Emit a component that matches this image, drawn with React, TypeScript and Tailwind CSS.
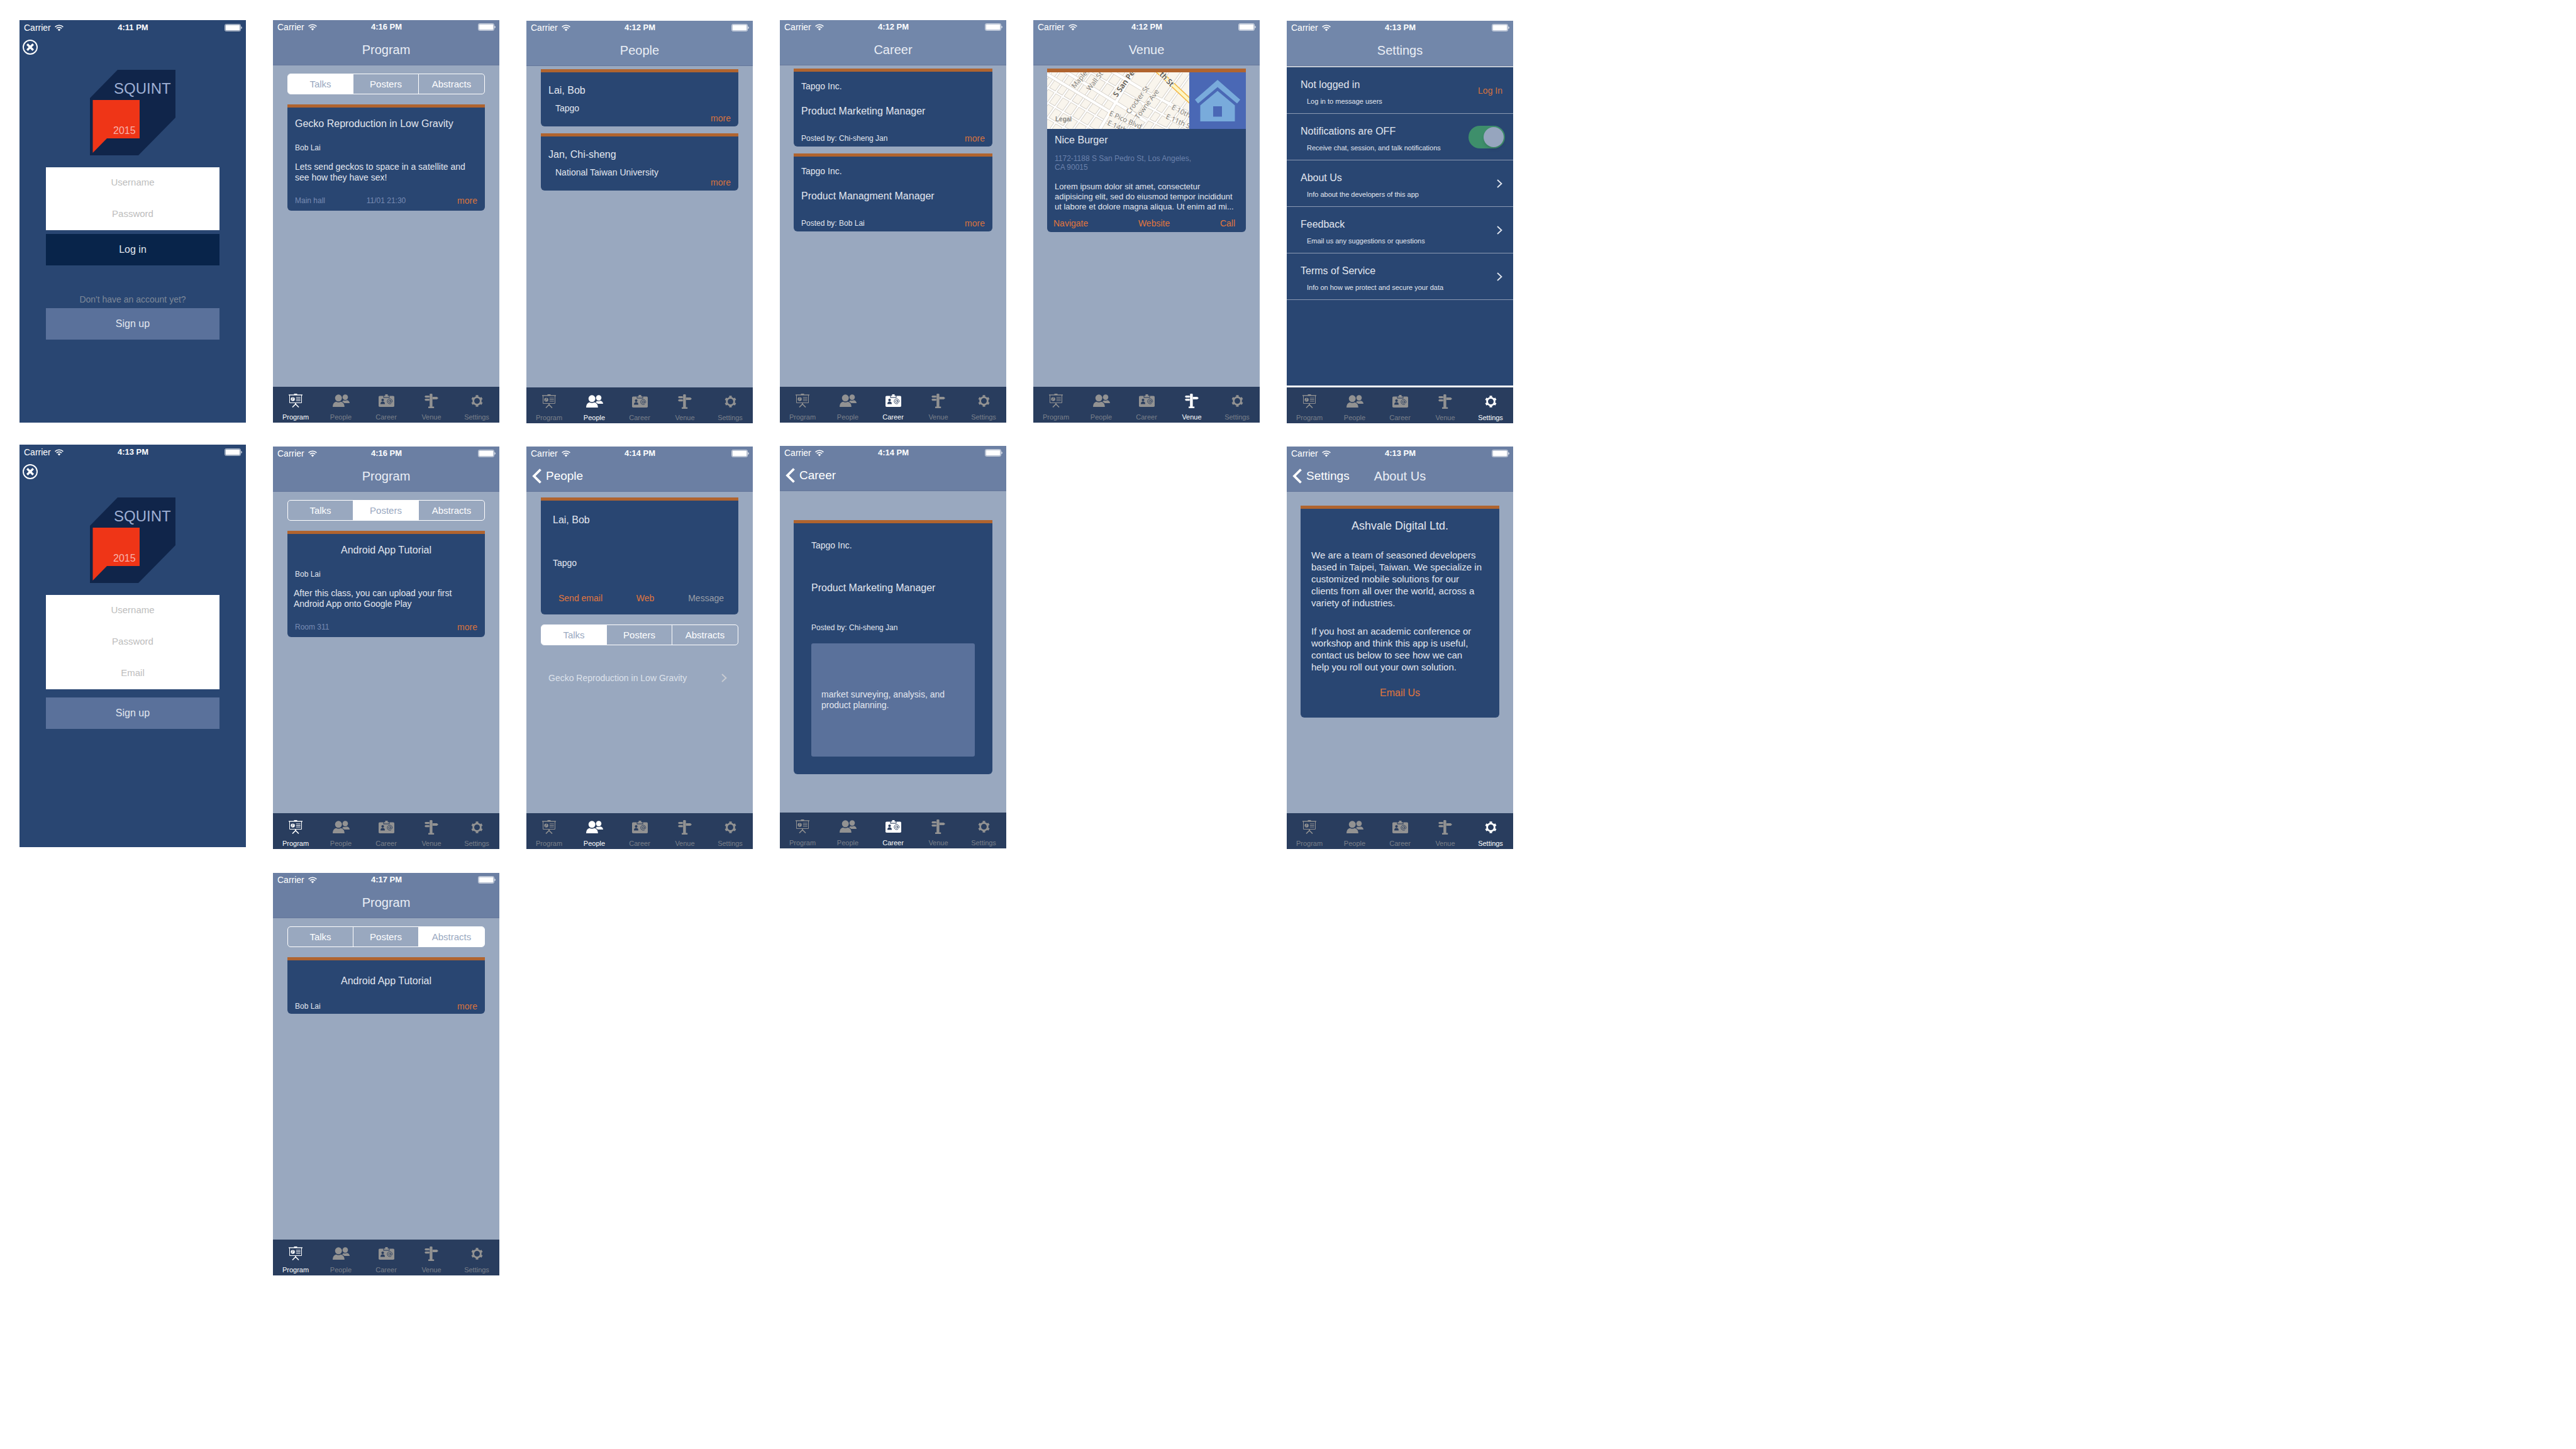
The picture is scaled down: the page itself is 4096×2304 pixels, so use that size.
import type { ReactNode } from "react";

const TABS = ["Program", "People", "Career", "Venue", "Settings"] as const;
type Tab = (typeof TABS)[number];

/* ---------- icons ---------- */

function TabIcon({ name }: { name: Tab }) {
  switch (name) {
    case "Program":
      return (
        <svg className="h-[22px] w-[22px]" viewBox="0 0 22 22" fill="none" stroke="currentColor">
          <path d="M0 2h22" strokeWidth="1.4" />
          <path d="M8.5 1h5" strokeWidth="2" />
          <path d="M1.5 2v12.5h19V2" strokeWidth="1" />
          <circle cx="6.6" cy="8.6" r="3.2" fill="currentColor" stroke="none" />
          <path d="M6.8 8.6V5.6M6.8 8.6l-2 1.8" className="stroke-[#293d5e]" strokeWidth="0.8" />
          <path d="M11.8 6h7M11.8 8.5h7M11.8 11h7" strokeWidth="1.1" />
          <path d="M11 15v2M11 16.5l-5 5M11 16.5l5 5" strokeWidth="1.6" />
        </svg>
      );
    case "People":
      return (
        <svg className="h-5 w-[27px]" viewBox="0 0 27 20" fill="currentColor">
          <circle cx="20" cy="4.6" r="4.3" />
          <path d="M17 9.400c1.800.8 4.200.8 6-.2 2.400.8 4 2.500 4 4.800h-8.500c-.8-1-2-1.700-3.500-2.200.9-.7 1.600-1.400 2-2.400z" />
          <circle cx="9.200" cy="5.800" r="5.500" />
          <path d="M0 20c0-4.500 1.800-7.300 5.400-8.300 2.300 1.300 5.400 1.300 7.600 0 3.900 1 5.800 3.800 5.800 8.300z" />
        </svg>
      );
    case "Career":
      return (
        <svg className="h-5 w-[25px]" viewBox="0 0 25 20" fill="currentColor">
          <rect x="0" y="2.500" width="25" height="17.500" rx="1.800" />
          <path d="M7.500 2v3.600h10V2" className="fill-[#293d5e]" />
          <path d="M10.500 0h4v2.200h2V4.600h-8V2.200h2z" />
          <g className="fill-[#293d5e]">
            <circle cx="6.500" cy="9" r="2.100" />
            <path d="M3 15.500c0-2.300 1-3.600 2.600-3.900h1.800c1.600.3 2.600 1.600 2.600 3.900z" />
          </g>
          <g className="stroke-[#293d5e]" fill="none" strokeWidth="0.9">
            <circle cx="17.800" cy="11.200" r="1.700" />
            <path d="M19.500 9.400v2.300c0 1.500 2.300 1.500 2.300-.5a4 4 0 1 0-1.700 3.200" />
          </g>
        </svg>
      );
    case "Venue":
      return (
        <svg className="h-[23px] w-[22px]" viewBox="0 0 22 23" fill="currentColor">
          <path d="M8.200 1c0-1.300 4.400-1.300 4.400 0v19.500h2.600V23H6v-2.500h2.200z" />
          <path d="M1.500 3h6v3.200h-6L0 4.600zM1.500 8h6v3.200h-6L0 9.600z" />
          <path d="M7 4.200h2v1H7zM7 9.200h2v1H7z" />
          <path d="M12.600 5h7.200l2.200 2-2.200 2h-7.200z" />
        </svg>
      );
    case "Settings":
      return (
        <svg className="h-[19px] w-[19px]" viewBox="0 0 19 19" fill="none" stroke="currentColor">
          <circle cx="9.500" cy="9.500" r="5.900" strokeWidth="2.800" />
          <path
            d="M9.500 3V.3M9.500 16v2.700M3.900 6.200 1.500 4.900M15.100 12.800l2.400 1.300M3.900 12.800l-2.400 1.300M15.100 6.200l2.400-1.300"
            strokeWidth="4"
          />
        </svg>
      );
  }
}

function Chevron() {
  return (
    <svg className="h-[14px] w-[9px] shrink-0" viewBox="0 0 9 14" fill="none" stroke="currentColor" strokeWidth="1.800">
      <path d="M1 1l6.500 6L1 13" />
    </svg>
  );
}

function BackChevron() {
  return (
    <svg className="h-6 w-[15px]" viewBox="0 0 15 24" fill="none" stroke="currentColor" strokeWidth="3.800">
      <path d="M13.500 1.500 3 12 13.500 22.500" />
    </svg>
  );
}

function Wifi() {
  return (
    <svg className="h-[11px] w-[14px]" viewBox="0 0 14 11" fill="none" stroke="currentColor" strokeWidth="1.500">
      <path d="M.6 3.900a9.200 9.200 0 0 1 12.800 0M2.800 6.200a6 6 0 0 1 8.400 0" />
      <path d="M7 10.600 4.700 8.100a3.300 3.300 0 0 1 4.600 0z" fill="currentColor" stroke="none" />
    </svg>
  );
}

function Battery() {
  return (
    <svg className="h-3 w-7" viewBox="0 0 28 12" fill="currentColor">
      <rect x="0.500" y="0.500" width="25" height="11" rx="2" fill="none" stroke="currentColor" strokeOpacity="0.600" />
      <rect x="1.500" y="1.500" width="23" height="9" rx="1" />
      <path d="M26.500 4v4c1.600-.5 1.600-3.500 0-4z" />
    </svg>
  );
}

function Logo() {
  return (
    <svg className="h-[136px] w-[136px]" viewBox="0 0 136 136" role="img" aria-label="SQUINT 2015">
      <path d="M44 0H136V76L77 136H0V45z" fill="#10254a" />
      <path d="M4.500 48H79V109H27L4.500 132z" fill="#ef3517" />
      <text x="38" y="38" fontSize="24" fill="#9fb0d4" fontFamily="Liberation Sans, Arial, sans-serif">
        SQUINT
      </text>
      <text x="37" y="102" fontSize="16" fill="#f8b3ab" fontFamily="Liberation Sans, Arial, sans-serif">
        2015
      </text>
    </svg>
  );
}

/* ---------- map ---------- */

const CROSS = [-58, -45, -28, -12, 6, 24, 42, 62, 110, 128, 150, 166, 190, 210];
const LONG = [-62, -40, 24, 48, 72];

function StreetMap() {
  return (
    <svg
      className="h-[90px] min-w-0 flex-1"
      viewBox="0 0 226 90"
      preserveAspectRatio="xMinYMin slice"
      fontFamily="Open Sans, Noto Sans, sans-serif"
      fontSize="11"
      fill="#7d7b78"
    >
      <rect width="226" height="90" fill="#f9f5ed" />
      <g stroke="#cdc8c0" strokeWidth="4">
        {CROSS.map((x) => (
          <path key={x} d={`M${x} 90l64-90`} />
        ))}
        {LONG.map((y) => (
          <path key={y} d={`M0 ${y}l226 132`} />
        ))}
        <path d="M128 59l98 48M150 50l76 38M168 36l58 28" />
      </g>
      <g stroke="#ffffff" strokeWidth="2.500">
        {CROSS.map((x) => (
          <path key={x} d={`M${x} 90l64-90`} />
        ))}
        {LONG.map((y) => (
          <path key={y} d={`M0 ${y}l226 132`} />
        ))}
        <path d="M128 59l98 48M150 50l76 38M168 36l58 28" />
      </g>
      <g stroke="#d5d0c8" strokeWidth="6">
        <path d="M0 3l150 90M28-2l130 80M84 90l55-92M96-6l60 36" />
      </g>
      <g stroke="#ffffff" strokeWidth="4.500">
        <path d="M0 3l150 90M28-2l130 80M84 90l55-92M96-6l60 36" />
      </g>
      <path d="M172-6l60 56" stroke="#f5b53f" strokeWidth="8" />
      <path d="M172-6l60 56" stroke="#fdf6c4" strokeWidth="5" />
      <g stroke="#f9f5ed" strokeWidth="2" paintOrder="stroke">
        <text x="44" y="26" transform="rotate(-50 44 26)">Maple</text>
        <text x="68" y="30" transform="rotate(-52 68 30)">Wall St</text>
        <text x="111" y="40" fontSize="12" fontWeight="600" fill="#55534f" transform="rotate(-54 111 40)">S San Ped</text>
        <text x="131" y="67" transform="rotate(-53 131 67)">Crocker St</text>
        <text x="145" y="75" transform="rotate(-53 145 75)">Towne Ave</text>
        <text x="98" y="68" transform="rotate(24 98 68)">E Pico Blvd</text>
        <text x="95" y="83" transform="rotate(24 95 83)">E 14th</text>
        <text x="197" y="58" transform="rotate(27 197 58)">E 10th</text>
        <text x="188" y="73" transform="rotate(24 188 73)">E 11th S</text>
        <text x="178" y="4" fontSize="12" fontWeight="600" fill="#55534f" transform="rotate(46 178 4)">th St</text>
      </g>
      <text x="13" y="78" fontWeight="700" fontSize="10" fill="#8b8986" fontFamily="Liberation Sans, Arial, sans-serif">
        Legal
      </text>
    </svg>
  );
}

function House() {
  return (
    <svg className="h-[90px] w-[90px] shrink-0 bg-[#4a68b5]" viewBox="0 0 90 90" fill="#79abdb">
      <path d="M45 12 81 43.500 76 49.500 45 23.500 14 49.500 9 43.500z" />
      <path d="M45 29.500 72.500 52.500V78H17.500V52.500zM38 54V70.500H52V54z" fillRule="evenodd" />
    </svg>
  );
}

/* ---------- phone chrome ---------- */

function StatusBar({ time }: { time: string }) {
  return (
    <div className="grid h-[22px] shrink-0 grid-cols-3 items-center pr-1.5 pl-[7px] text-white">
      <div className="flex items-center gap-1.5 text-[14px] leading-4">
        <span>Carrier</span>
        <Wifi />
      </div>
      <div className="text-center text-[13px] leading-4 font-bold">{time}</div>
      <div className="flex justify-end">
        <Battery />
      </div>
    </div>
  );
}

function Header({ time, title, back, tint }: { time: string; title?: string; back?: string; tint: string }) {
  return (
    <header className={`flex h-[72px] shrink-0 flex-col border-b border-[#65779b] ${tint}`}>
      <StatusBar time={time} />
      <div className="grid flex-1 grid-cols-[1fr_auto_1fr] items-center px-[9px]">
        <div>
          {back && (
            <button type="button" className="flex items-center gap-[7px] text-[19px] leading-6 text-white">
              <BackChevron />
              {back}
            </button>
          )}
        </div>
        {title && <h1 className="text-[20px] leading-6 text-[#eaeef5]">{title}</h1>}
      </div>
    </header>
  );
}

function TabBar({ active }: { active: Tab }) {
  return (
    <nav className="grid h-[57px] shrink-0 grid-cols-5 bg-[#293d5e]">
      {TABS.map((t) => (
        <button
          key={t}
          type="button"
          className={
            t === active
              ? "flex flex-col items-center gap-1.5 pt-2.5 text-white"
              : "flex flex-col items-center gap-1.5 pt-2.5 text-[#929292]"
          }
        >
          <span className="flex h-6 items-center">
            <TabIcon name={t} />
          </span>
          <span className={t === active ? "text-[11px] leading-4 text-white" : "text-[11px] leading-4 text-[#7b808a]"}>{t}</span>
        </button>
      ))}
    </nav>
  );
}

function Phone({ children, dark }: { children: ReactNode; dark?: boolean }) {
  return (
    <section
      className={
        dark
          ? "flex min-h-[640px] w-full flex-col bg-[#294672] text-[#e3e7ef]"
          : "flex min-h-[640px] w-full flex-col bg-[#99a8bf] text-[#e3e7ef]"
      }
    >
      {children}
    </section>
  );
}

function Screen(props: {
  time: string;
  title?: string;
  back?: string;
  active: Tab;
  tint?: string;
  dark?: boolean;
  children: ReactNode;
}) {
  return (
    <Phone dark={props.dark}>
      <Header time={props.time} title={props.title} back={props.back} tint={props.tint ?? "bg-[#6b7fa3]"} />
      <div className="flex flex-1 flex-col">{props.children}</div>
      <TabBar active={props.active} />
    </Phone>
  );
}

/* ---------- shared pieces ---------- */

function Segments({ selected }: { selected: string }) {
  return (
    <div className="grid h-[33px] grid-cols-3 divide-x divide-white overflow-hidden rounded-[5px] border border-white">
      {["Talks", "Posters", "Abstracts"].map((s) => (
        <button
          key={s}
          type="button"
          className={s === selected ? "bg-white text-[15px] leading-5 text-[#99a8bf]" : "text-[15px] leading-5 text-white"}
        >
          {s}
        </button>
      ))}
    </div>
  );
}

function More() {
  return (
    <a href="#more" className="ml-auto text-[14px] leading-4 text-[#d9733e]">
      more
    </a>
  );
}

const CARD = "flex flex-col rounded-b-[6px] border-t-[5px] border-[#b0642f] bg-[#294672]";

/* ---------- screens ---------- */

function AuthTop({ time }: { time: string }) {
  return (
    <>
      <div className="pt-px">
        <StatusBar time={time} />
      </div>
      <button type="button" aria-label="Close" className="mt-2 ml-[5px] h-6 w-6">
        <svg viewBox="0 0 24 24" fill="none" stroke="#fff">
          <circle cx="12" cy="12" r="11" strokeWidth="1.900" />
          <path d="M7.200 7.200l9.600 9.600M16.800 7.200l-9.600 9.600" strokeWidth="3.400" />
        </svg>
      </button>
    </>
  );
}

function Field({ name, type = "text" }: { name: string; type?: string }) {
  return (
    <input
      type={type}
      aria-label={name}
      placeholder={name}
      className="h-[50px] w-full bg-white pb-1 text-center text-[15px] text-[#333] placeholder:text-[#bdbdbd]"
    />
  );
}

function Login() {
  return (
    <Phone dark>
      <AuthTop time="4:11 PM" />
      <div className="mt-6 flex justify-center">
        <Logo />
      </div>
      <form className="mx-[42px] mt-[19px] flex flex-col">
        <Field name="Username" />
        <Field name="Password" type="password" />
        <button type="button" className="mt-1.5 h-[50px] bg-[#08244a] text-[16px] leading-5">
          Log in
        </button>
        <p className="mt-11 text-center text-[14px] leading-5 text-[#7f8998]">Don't have an account yet?</p>
        <button type="button" className="mt-1 h-[50px] bg-[#5a719b] text-[16px] leading-5">
          Sign up
        </button>
      </form>
    </Phone>
  );
}

function SignUp() {
  return (
    <Phone dark>
      <AuthTop time="4:13 PM" />
      <div className="mt-[29px] flex justify-center">
        <Logo />
      </div>
      <form className="mx-[42px] mt-[19px] flex flex-col">
        <Field name="Username" />
        <Field name="Password" type="password" />
        <Field name="Email" type="email" />
        <button type="button" className="mt-[13px] h-[50px] bg-[#5a719b] text-[16px] leading-5">
          Sign up
        </button>
      </form>
    </Phone>
  );
}

function ProgramTalks() {
  return (
    <Screen time="4:16 PM" title="Program" active="Program">
      <div className="flex flex-col gap-4 px-[23px] pt-[13px]">
        <Segments selected="Talks" />
        <article className={`${CARD} px-3 pt-4 pb-2`}>
          <h2 className="text-[16px] leading-5">Gecko Reproduction in Low Gravity</h2>
          <p className="mt-5 text-[12px] leading-4">Bob Lai</p>
          <p className="mt-3.5 text-[14px] leading-[17px]">Lets send geckos to space in a satellite and see how they have sex!</p>
          <div className="mt-5 grid grid-cols-3 items-center text-[12px] leading-4 text-[#788bb2]">
            <span>Main hall</span>
            <time className="text-center">11/01 21:30</time>
            <More />
          </div>
        </article>
      </div>
    </Screen>
  );
}

function ProgramPosters() {
  return (
    <Screen time="4:16 PM" title="Program" active="Program">
      <div className="flex flex-col gap-4 px-[23px] pt-[13px]">
        <Segments selected="Posters" />
        <article className={`${CARD} px-3 pt-4 pb-2`}>
          <h2 className="text-center text-[16px] leading-5">Android App Tutorial</h2>
          <p className="mt-5 text-[12px] leading-4">Bob Lai</p>
          <p className="-ml-0.5 mt-3.5 text-[14px] leading-[17px]">
            After this class, you can upload your first
            <br />
            Android App onto Google Play
          </p>
          <div className="mt-5 flex items-center text-[12px] leading-4 text-[#788bb2]">
            <span>Room 311</span>
            <More />
          </div>
        </article>
      </div>
    </Screen>
  );
}

function ProgramAbstracts() {
  return (
    <Screen time="4:17 PM" title="Program" active="Program">
      <div className="flex flex-col gap-4 px-[23px] pt-[13px]">
        <Segments selected="Abstracts" />
        <article className={`${CARD} px-3 pt-[23px] pb-1`}>
          <h2 className="text-center text-[16px] leading-5">Android App Tutorial</h2>
          <div className="mt-[22px] flex items-center text-[12px] leading-4">
            <span>Bob Lai</span>
            <More />
          </div>
        </article>
      </div>
    </Screen>
  );
}

function PeopleList() {
  const people = [
    ["Lai, Bob", "Tapgo"],
    ["Jan, Chi-sheng", "National Taiwan University"],
  ];
  return (
    <Screen time="4:12 PM" title="People" active="People" tint="bg-[#7287aa]">
      <ul className="flex flex-col gap-[11px] px-[23px] pt-[5px]">
        {people.map(([name, org]) => (
          <li key={name} className={`${CARD} px-3 pt-[19px] pb-[5px]`}>
            <h2 className="text-[16px] leading-5">{name}</h2>
            <p className="mt-2.5 pl-[11px] text-[14px] leading-4">{org}</p>
            <More />
          </li>
        ))}
      </ul>
    </Screen>
  );
}

function PersonDetail() {
  return (
    <Screen time="4:14 PM" back="People" active="People">
      <div className="flex flex-col px-[23px] pt-[9px]">
        <article className={`${CARD} px-[19px] pt-[21px] pb-[18px]`}>
          <h2 className="text-[16px] leading-5">Lai, Bob</h2>
          <p className="mt-[50px] text-[14px] leading-4">Tapgo</p>
          <div className="mt-10 flex justify-between pr-1 pl-[9px] text-[14px] leading-4 text-[#e2763d]">
            <a href="#email">Send email</a>
            <a href="#web">Web</a>
            <a href="#message" className="text-[#9a9ea6]">
              Message
            </a>
          </div>
        </article>
        <div className="mt-4">
          <Segments selected="Talks" />
        </div>
        <a href="#talk" className="mt-[42px] flex items-center justify-between pr-[18px] pl-3 text-[14px] leading-5 text-[#dde2eb]">
          Gecko Reproduction in Low Gravity
          <span className="text-[#c9ccd2]">
            <Chevron />
          </span>
        </a>
      </div>
    </Screen>
  );
}

function CareerList() {
  const jobs = [
    ["Product Marketing Manager", "Chi-sheng Jan"],
    ["Product Managment Manager", "Bob Lai"],
  ];
  return (
    <Screen time="4:12 PM" title="Career" active="Career" tint="bg-[#7287aa]">
      <ul className="flex flex-col gap-[11px] px-[22px] pt-[5px]">
        {jobs.map(([job, by]) => (
          <li key={job} className={`${CARD} px-3 pt-[15px] pb-[5px]`}>
            <p className="text-[14px] leading-4">Tapgo Inc.</p>
            <h2 className="mt-[22px] text-[16px] leading-5">{job}</h2>
            <div className="mt-[25px] flex items-center text-[12px] leading-4">
              <span>Posted by: {by}</span>
              <More />
            </div>
          </li>
        ))}
      </ul>
    </Screen>
  );
}

function CareerDetail() {
  return (
    <Screen time="4:14 PM" back="Career" active="Career">
      <div className="px-[22px] pt-[46px]">
        <article className={`${CARD} px-7 pt-[27px] pb-7`}>
          <p className="text-[14px] leading-4">Tapgo Inc.</p>
          <h2 className="mt-[50px] text-[16px] leading-5">Product Marketing Manager</h2>
          <p className="mt-[45px] text-[12px] leading-4">Posted by: Chi-sheng Jan</p>
          <div className="mt-[17px] flex h-[180px] items-center rounded-[3px] bg-[#5a719b] px-4 text-[14px] leading-[17px]">
            market surveying, analysis, and product planning.
          </div>
        </article>
      </div>
    </Screen>
  );
}

function Venue() {
  return (
    <Screen time="4:12 PM" title="Venue" active="Venue" tint="bg-[#7287aa]">
      <div className="px-[22px] pt-[5px]">
        <article className="flex flex-col rounded-b-[6px] border-t-[6px] border-[#b0642f] bg-[#294672] pb-1.5">
          <div className="flex">
            <StreetMap />
            <House />
          </div>
          <div className="px-3 pt-2">
            <h2 className="text-[16px] leading-5">Nice Burger</h2>
            <p className="mt-3 text-[12px] leading-[14px] text-[#6c82ac]">
              1172-1188 S San Pedro St, Los Angeles,
              <br />
              CA 90015
            </p>
            <p className="mt-4 text-[13px] leading-4 whitespace-nowrap">
              Lorem ipsum dolor sit amet, consectetur
              <br />
              adipisicing elit, sed do eiusmod tempor incididunt
              <br />
              ut labore et dolore magna aliqua. Ut enim ad mi...
            </p>
          </div>
          <div className="mt-2.5 flex justify-between pr-[17px] pl-2.5 text-[14px] leading-4 text-[#e2763d]">
            <a href="#navigate">Navigate</a>
            <a href="#website">Website</a>
            <a href="#call">Call</a>
          </div>
        </article>
      </div>
    </Screen>
  );
}

function SettingsRow({ title, note, children }: { title: string; note: string; children: ReactNode }) {
  return (
    <li className="flex h-[74px] items-center border-b border-[#8c9ab3] pr-[17px] pl-[22px]">
      <div className="flex flex-1 flex-col gap-2 pt-1.5">
        <h2 className="text-[16px] leading-5">{title}</h2>
        <p className="pl-2.5 text-[11px] leading-4">{note}</p>
      </div>
      {children}
    </li>
  );
}

function Settings() {
  return (
    <Screen time="4:13 PM" title="Settings" active="Settings" tint="bg-[#7287aa]" dark>
      <ul className="flex-1 border-t-2 border-[#c3cad6]">
        <SettingsRow title="Not logged in" note="Log in to message users">
          <button type="button" className="text-[14px] leading-5 text-[#d9733e]">
            Log In
          </button>
        </SettingsRow>
        <SettingsRow title="Notifications are OFF" note="Receive chat, session, and talk notifications">
          <input
            type="checkbox"
            role="switch"
            aria-label="Notifications"
            defaultChecked
            className="-mr-1 flex h-9 w-[58px] appearance-none items-center rounded-full bg-[#3e8f6b] p-0.5 before:ml-auto before:h-8 before:w-8 before:rounded-full before:bg-[#96a5be] before:shadow-md before:content-['']"
          />
        </SettingsRow>
        <SettingsRow title="About Us" note="Info about the developers of this app">
          <Chevron />
        </SettingsRow>
        <SettingsRow title="Feedback" note="Email us any suggestions or questions">
          <Chevron />
        </SettingsRow>
        <SettingsRow title="Terms of Service" note="Info on how we protect and secure your data">
          <Chevron />
        </SettingsRow>
      </ul>
      <div className="h-[3px] bg-white" />
    </Screen>
  );
}

function About() {
  return (
    <Screen time="4:13 PM" title="About Us" back="Settings" active="Settings">
      <div className="px-[22px] pt-[22px]">
        <article className={`${CARD} px-[17px] pt-[15px] pb-[29px]`}>
          <h2 className="text-center text-[18px] leading-6">Ashvale Digital Ltd.</h2>
          <p className="mt-[25px] text-[15px] leading-[19px] whitespace-nowrap">
            We are a team of seasoned developers
            <br />
            based in Taipei, Taiwan. We specialize in
            <br />
            customized mobile solutions for our
            <br />
            clients from all over the world, across a
            <br />
            variety of industries.
          </p>
          <p className="mt-[26px] text-[15px] leading-[19px] whitespace-nowrap">
            If you host an academic conference or
            <br />
            workshop and think this app is useful,
            <br />
            contact us below to see how we can
            <br />
            help you roll out your own solution.
          </p>
          <a href="#email-us" className="mt-[22px] text-center text-[16px] leading-5 text-[#e2763d]">
            Email Us
          </a>
        </article>
      </div>
    </Screen>
  );
}

export default function App() {
  return (
    <main className="grid min-h-screen grid-cols-10 items-start gap-x-[43px] bg-white pt-8 pr-[78px] pl-[31px] font-['Liberation_Sans',Arial,sans-serif]">
      <div className="flex flex-col gap-[35px]">
        <Login />
        <SignUp />
      </div>
      <div className="flex flex-col gap-[38px]">
        <ProgramTalks />
        <ProgramPosters />
        <ProgramAbstracts />
      </div>
      <div className="flex flex-col gap-[37px] pt-px">
        <PeopleList />
        <PersonDetail />
      </div>
      <div className="flex flex-col gap-[37px]">
        <CareerList />
        <CareerDetail />
      </div>
      <div className="flex flex-col">
        <Venue />
      </div>
      <div className="flex flex-col gap-[37px] pt-px">
        <Settings />
        <About />
      </div>
    </main>
  );
}
